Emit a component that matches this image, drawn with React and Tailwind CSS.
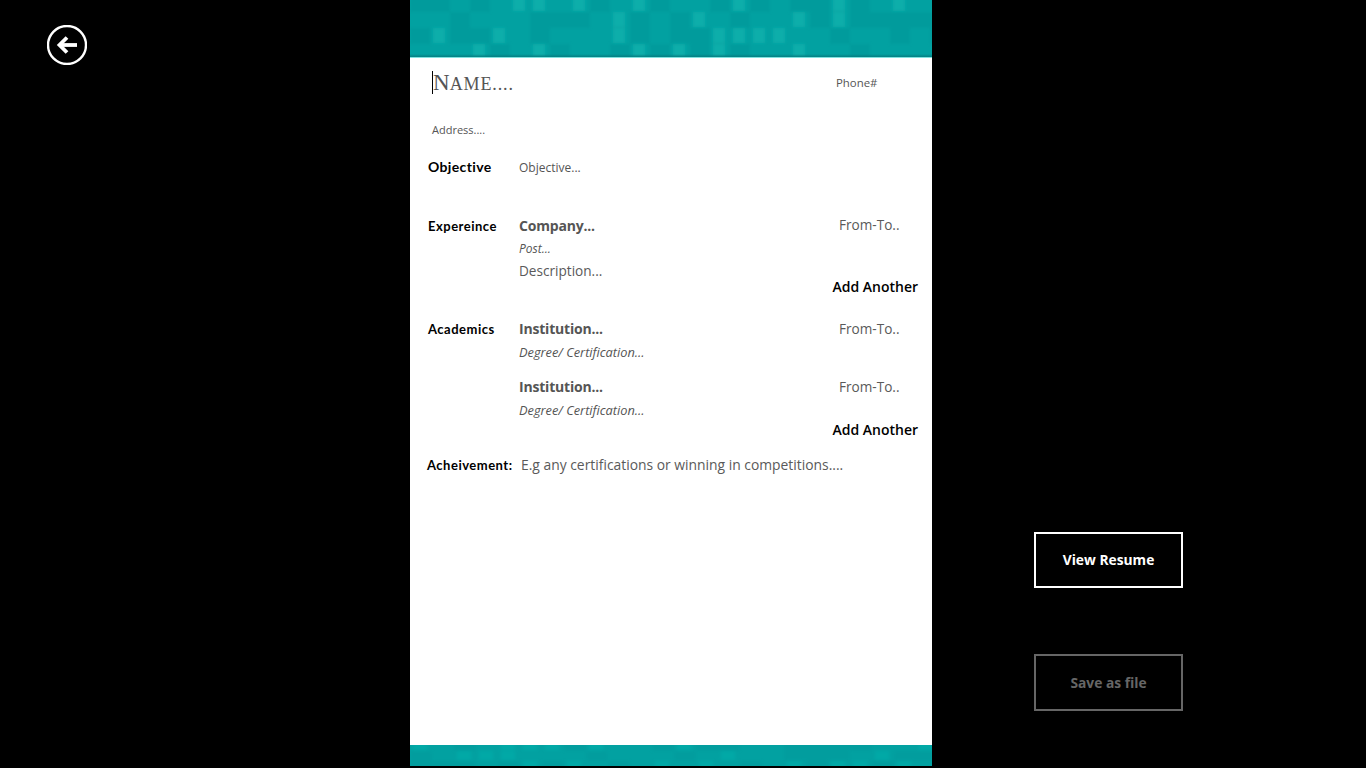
import React from 'react'

const sans = 'font-["Open_Sans",sans-serif]'
const label = 'font-["Lato",sans-serif] font-bold text-[13px] tracking-[0.5px] text-black leading-[20px] w-[91px] shrink-0'

// teal mosaic of the header and footer bands
function Mosaic({ width, height, seed, cell = 20, rowH = 16, strength = 1 }) {
  const rects = []
  let n = seed
  for (let y = -4; y < height; y += rowH) {
    for (let x = 0; x < width; x += cell) {
      n = (n * 137 + 71) % 1009
      const kind = n % 7
      if (kind < 2) rects.push(<rect key={`${x}-${y}`} x={x + 3} y={y} width={cell - 8} height={rowH - 1} fill="#0bb2ae" opacity={0.75 * strength} />)
      else if (kind < 4) rects.push(<rect key={`${x}-${y}`} x={x} y={y} width={cell} height={rowH} fill="#048f92" opacity={0.35 * strength} />)
    }
  }
  return (
    <svg width={width} height={height} className="block">
      <defs>
        <filter id={`soft${seed}`}><feGaussianBlur stdDeviation="1.6" /></filter>
      </defs>
      <rect width={width} height={height} fill="#02a1a1" />
      <g filter={`url(#soft${seed})`}>{rects}</g>
    </svg>
  )
}

function BackIcon() {
  return (
    <svg width="40" height="40" viewBox="0 0 40 40" fill="none" stroke="white">
      <circle cx="20" cy="20" r="19" strokeWidth="2.4" />
      <path d="M30 20H13" strokeWidth="3.8" />
      <path d="M20 12.5L12.5 20L20 27.5" strokeWidth="3.8" />
    </svg>
  )
}

function Entry({ title, sub, subSize, fromLeading }) {
  return (
    <div className="flex">
      <div className="flex-1">
        <div className="text-[14px] leading-[20px] font-bold tracking-[-0.2px] text-[#555]">{title}</div>
        <div className={`${subSize} leading-[26px] italic text-[#555]`}>{sub}</div>
      </div>
      <div className={`w-[79px] shrink-0 text-[13.6px] ${fromLeading} text-[#5a5a5a]`}>From-To..</div>
    </div>
  )
}

function AddAnother() {
  return <div className="text-right text-[14px] leading-[20px] font-semibold text-black">Add Another</div>
}

export default function App() {
  return (
    <div className={`flex h-[768px] w-[1366px] overflow-hidden bg-black ${sans}`}>
      <div className="w-[410px] shrink-0 pl-[47px] pt-[25px]">
        <BackIcon />
      </div>

      <div className="flex h-[766px] w-[522px] shrink-0 flex-col bg-white">
        <div className="relative h-[58px] shrink-0 border-b border-[#7fe3df]">
          <Mosaic width={522} height={57} seed={11} />
          <div className="absolute inset-x-0 bottom-0 h-[3px] bg-gradient-to-b from-transparent to-[#067f82]" />
        </div>

        <div className="flex-1 pl-[18px] pr-[14px]">
          <div className="flex h-[44px] items-center pl-[4px] pt-[6px]">
            <div className="w-[404px]">
              <span className="inline-block border-l border-black pt-[2px] font-['Liberation_Serif',serif] text-[23px] leading-[20px] text-[#555]">
                N<span className="text-[18px] uppercase tracking-[0.9px]">ame....</span>
              </span>
            </div>
            <div className="text-[11.4px] leading-[16px] text-[#555]">Phone#</div>
          </div>

          <div className="mt-[20px] pl-[4px] text-[11px] leading-[16px] text-[#555]">Address....</div>

          <div className="mt-[20px] flex items-center">
            <div className={`${label} -mt-[2px] text-[14px] tracking-[0.35px]`}>Objective</div>
            <div className="text-[12px] leading-[20px] text-[#555]">Objective...</div>
          </div>

          <div className="mt-[38px] flex">
            <div className={label}>Expereince</div>
            <div className="flex-1">
              <Entry title="Company..." sub="Post..." subSize="text-[12px]" fromLeading="leading-[18px]" />
              <div className="-mt-[1px] text-[13.6px] leading-[20px] text-[#5a5a5a]">Description...</div>
              <div className="-mt-[4px]"><AddAnother /></div>
            </div>
          </div>

          <div className="mt-[22px] flex">
            <div className={label}>Academics</div>
            <div className="flex-1">
              <Entry title="Institution..." sub="Degree/ Certification..." subSize="text-[12.8px]" fromLeading="leading-[20px]" />
              <div className="mt-[12px]">
                <Entry title="Institution..." sub="Degree/ Certification..." subSize="text-[12.8px]" fromLeading="leading-[20px]" />
              </div>
              <div className="-mt-[3px]"><AddAnother /></div>
            </div>
          </div>

          <div className="mt-[15px] flex">
            <div className={`${label} -ml-[1px] w-[94px] whitespace-nowrap tracking-[0.2px]`}>Acheivement:</div>
            <div className="text-[13.87px] leading-[20px] text-[#5a5a5a]">E.g any certifications or winning in competitions....</div>
          </div>
        </div>

        <div className="h-[21px] shrink-0 overflow-hidden">
          <Mosaic width={522} height={21} seed={29} cell={22} rowH={10} strength={0.6} />
        </div>
      </div>

      <div className="flex flex-1 flex-col pl-[102px] pt-[532px]">
        <button className="h-[56px] w-[149px] border-2 border-white pt-[1px] text-[13.8px] font-bold text-white">View Resume</button>
        <button className="mt-[66px] h-[57px] w-[149px] border-2 border-[#666] pt-[2px] text-[13.8px] font-bold text-[#666]">Save as file</button>
      </div>
    </div>
  )
}
